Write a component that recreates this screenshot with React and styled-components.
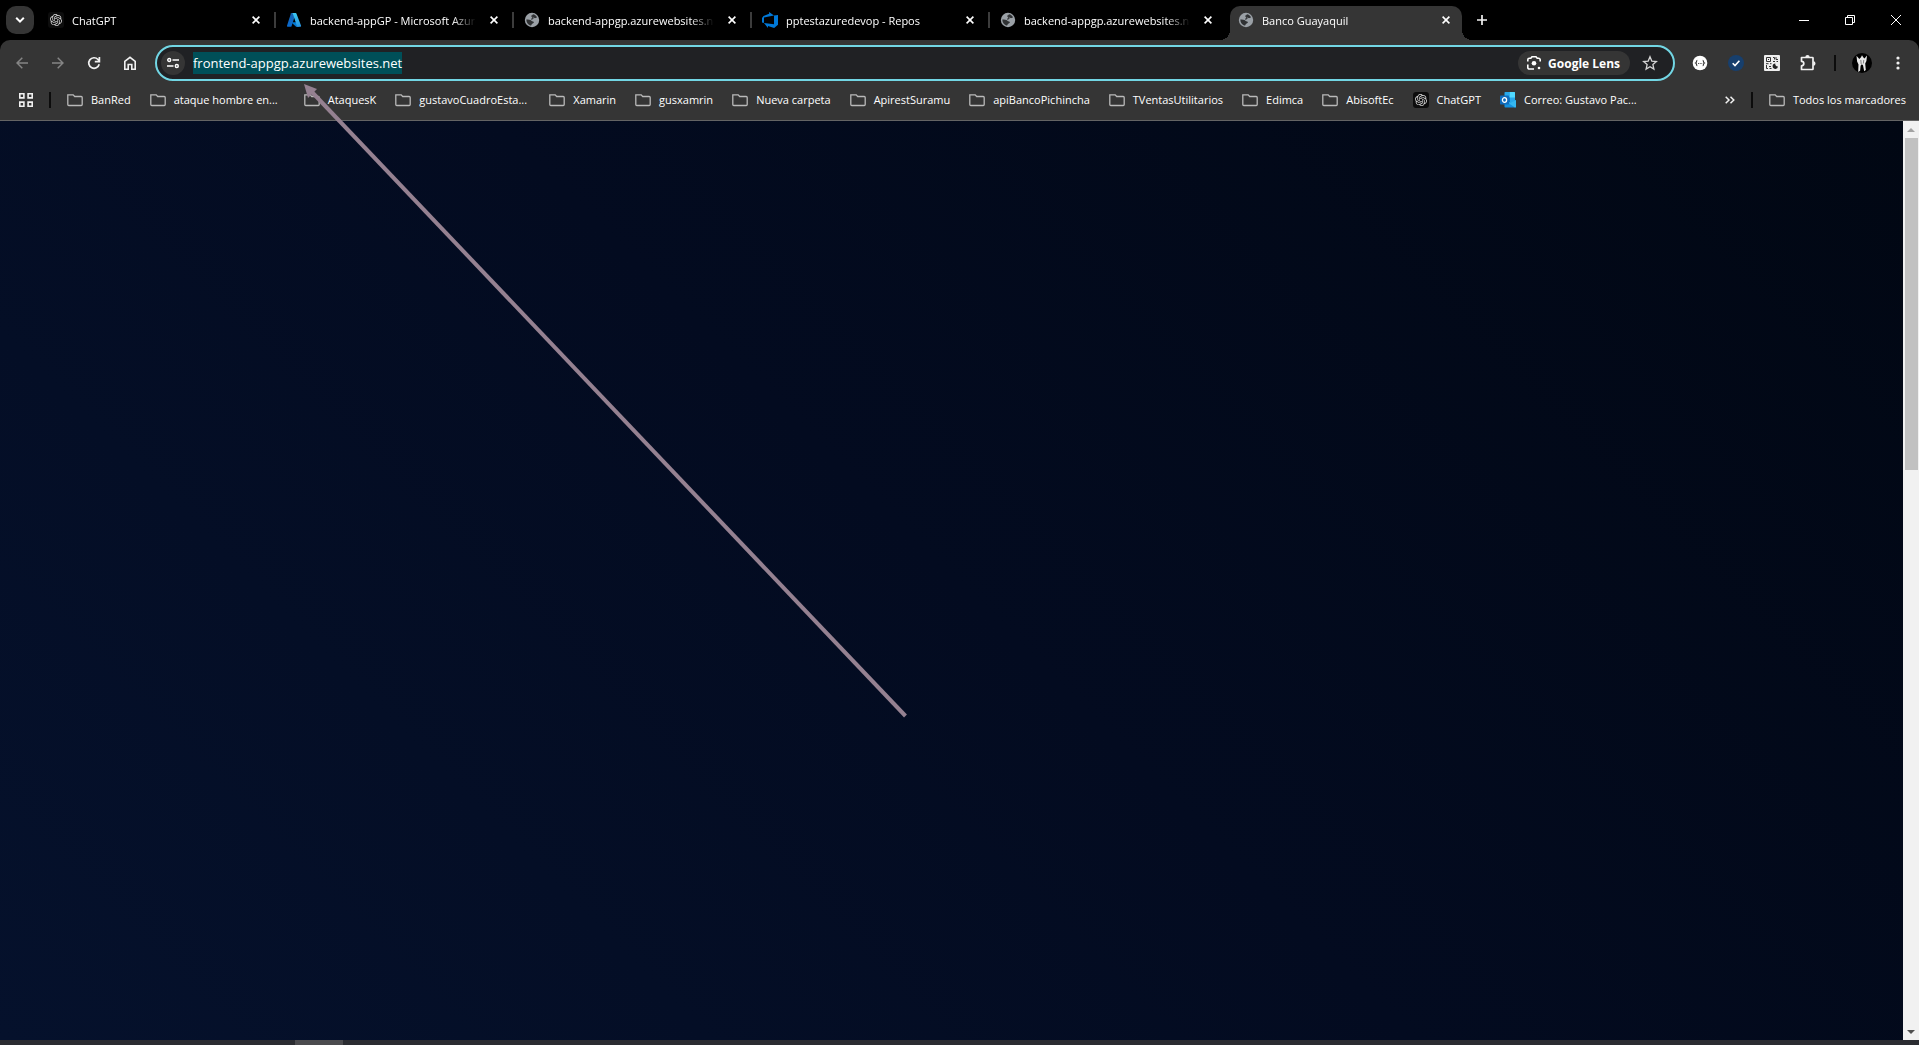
import React, { useEffect, useRef } from "react";
import styled, { createGlobalStyle, css } from "styled-components";
import { SiOpenai } from "react-icons/si";

const chrome = "#353535";

const GlobalStyle = createGlobalStyle`
  * { box-sizing: border-box; }
  html, body, #root { height: 100%; }
  body {
    margin: 0;
    background: #000;
    color: #fff;
    font-family: "Open Sans", "Noto Sans", sans-serif;
    font-size: 11px;
    overflow: hidden;
  }
  button { font: inherit; color: inherit; background: none; border: 0; padding: 0; }
  svg { display: block; flex: none; }
`;

const Window = styled.div`
  position: relative;
  display: flex;
  flex-direction: column;
  height: 100vh;
`;

const TabStrip = styled.header`
  display: flex;
  align-items: center;
  height: 40px;
  padding-left: 6px;
  background: #000;
`;

const TabSearch = styled.button`
  display: grid;
  place-items: center;
  flex: none;
  width: 28px;
  height: 28px;
  margin-right: 4px;
  border-radius: 10px;
  background: ${chrome};
`;

const Tabs = styled.nav`
  display: flex;
  min-width: 0;
  height: 40px;
`;

const Tab = styled.div`
  position: relative;
  display: flex;
  align-items: center;
  flex: 0 1 238px;
  width: 238px;
  min-width: 0;
  padding: 0 10px;
  z-index: 0;

  ${({ $divided }) => $divided && css`
    &::after {
      content: "";
      position: absolute;
      right: 0;
      top: 12px;
      width: 2px;
      height: 16px;
      background: #3c3c3c;
    }
  `}

  ${({ $active }) => $active && css`
    &::before {
      content: "";
      position: absolute;
      z-index: -1;
      inset: 6px 4px 0 2px;
      border-radius: 10px 10px 0 0;
      background: ${chrome};
    }
    &::after {
      content: "";
      position: absolute;
      z-index: -1;
      left: -8px;
      right: -6px;
      bottom: 0;
      height: 10px;
      background:
        radial-gradient(circle at 0 0, transparent 10px, ${chrome} 10px) left / 10px 10px no-repeat,
        radial-gradient(circle at 100% 0, transparent 10px, ${chrome} 10px) right / 10px 10px no-repeat;
    }
  `}
`;

const TabSelect = styled.button`
  display: flex;
  align-items: center;
  gap: 8px;
  flex: 1;
  min-width: 0;
  height: 28px;
  text-align: left;
`;

const TabTitle = styled.span`
  flex: 1;
  padding-top: 2px;
  overflow: hidden;
  white-space: nowrap;
  line-height: 16px;
  mask-image: linear-gradient(to right, #000 calc(100% - 24px), transparent);
`;

const TabClose = styled.button`
  display: grid;
  place-items: center;
  flex: none;
  width: 16px;
  height: 16px;
  margin: 0 2px 0 10px;
`;

const RoundButton = styled.button`
  display: grid;
  place-items: center;
  flex: none;
  width: 28px;
  height: 28px;
  border-radius: 50%;
  color: ${({ $dim }) => ($dim ? "#858585" : "#f1f1f1")};
`;

const NewTab = styled(RoundButton)`
  margin-left: 2px;
`;

const WindowControls = styled.div`
  display: flex;
  margin-left: auto;
`;

const WindowButton = styled.button`
  display: grid;
  place-items: center;
  width: 46px;
  height: 40px;
`;

const Toolbar = styled.div`
  display: flex;
  align-items: center;
  gap: 11px;
  padding: 5px 7px 0 8px;
  border-radius: 10px 10px 0 0;
  background: ${chrome};
`;

const ButtonGroup = styled.div`
  display: flex;
  align-items: center;
  gap: 8px;
`;

const Divider = styled.span`
  flex: none;
  width: 2px;
  height: 16px;
  margin: ${({ $gap }) => `0 ${$gap}px`};
  background: #0c0c0c;
`;

const AddressBar = styled.form`
  display: flex;
  align-items: center;
  flex: 1;
  min-width: 0;
  height: 36px;
  padding: 0 9px 0 4px;
  border: 2px solid #72d6e4;
  border-radius: 18px;
  background: #202124;
`;

const SiteInfo = styled.button`
  display: grid;
  place-items: center;
  width: 24px;
  height: 24px;
  margin-right: 8px;
  border-radius: 50%;
  background: ${chrome};
`;

const AddressInput = styled.input`
  flex: 1;
  min-width: 0;
  height: 22px;
  padding: 0;
  border: 0;
  outline: 0;
  background: none;
  color: #fff;
  font: 13px/22px "Open Sans", "Noto Sans", sans-serif;
  &::selection { background: #004f58; color: #fff; }
`;

const LensButton = styled.button`
  display: flex;
  align-items: center;
  gap: 6px;
  height: 24px;
  padding: 0 10px 0 8px;
  margin-right: 10px;
  border-radius: 12px;
  background: ${chrome};
  font-size: 12px;
  font-weight: 700;
  white-space: nowrap;
`;

const StarButton = styled.button`
  display: grid;
  place-items: center;
  width: 20px;
  height: 24px;
  margin-right: 4px;
`;

const BookmarkBar = styled.nav`
  display: flex;
  align-items: center;
  height: 40px;
  padding: 0 13px 2px 19px;
  border-bottom: 1px solid #646464;
  background: ${chrome};
`;

const BookmarkList = styled.div`
  display: flex;
  flex: 1;
  min-width: 0;
  gap: 19px;
  overflow: hidden;
`;

const Bookmark = styled.button`
  display: flex;
  align-items: center;
  flex: none;
  gap: 8px;
  width: ${({ $long }) => ($long ? "135px" : "auto")};
  height: 28px;
  white-space: nowrap;
`;

const PlainButton = styled.button`
  display: grid;
  place-items: center;
`;

const Viewport = styled.main`
  display: flex;
  flex: 1;
  min-height: 0;
`;

const Page = styled.section`
  flex: 1;
  background: linear-gradient(45deg, #05112c 0%, #030b20 50%, #010713 100%);
`;

const ScrollTrack = styled.div`
  display: flex;
  flex-direction: column;
  align-items: center;
  width: 16px;
  background: #f1f1f1;
`;

const ScrollArrow = styled.button`
  display: grid;
  place-items: center;
  width: 16px;
  height: 17px;
  color: ${({ $dim }) => ($dim ? "#a3a3a3" : "#505050")};
`;

const ScrollBody = styled.div`
  display: grid;
  grid-template-rows: 3fr 5fr;
  flex: 1;
  width: 13px;
`;

const ScrollThumb = styled.div`
  background: #c1c1c1;
`;

const Taskbar = styled.footer`
  display: flex;
  flex: none;
  height: 5px;
  padding-left: 295px;
  background: #2b2c31;
`;

const TaskbarItem = styled.span`
  width: 48px;
  background: #4b4b4e;
`;

const Arrow = styled.svg`
  position: absolute;
  left: 300px;
  top: 80px;
  pointer-events: none;
`;

const Close = () => (
  <svg width="8" height="8" viewBox="0 0 8 8" stroke="#fff" strokeWidth="1.6">
    <path d="M.6.6l6.8 6.8M7.4.6L.6 7.4" />
  </svg>
);

const Globe = () => (
  <svg width="16" height="16" viewBox="0 0 16 16">
    <circle cx="8" cy="8" r="7.2" fill="#9aa0a6" />
    <path
      d="M9 2.2c1.600.3 3.300 1.400 4.100 3-.9.500-1.500 1.100-2.600.9-.9-.2-.700-1-1.600-1.100-.7-.1-1.200-.8-.9-1.500zM2.300 7.500c1.600-.2 3.100-.1 4.200.5 1 .6 1.300 1.300 2.500 1.400 1.100.1 1.100 1.100.4 1.700-.8.600-1.700.7-1.800 1.700-.1.700-.7 1-1.400.7-2.300-.9-3.900-3.200-3.900-6z"
      fill="#303234"
    />
    <path d="M8 3.500c-.5 1.200.7 1.500 1 2.300.3.900-.9 1.200-1.900 1.300" fill="none" stroke="#303234" strokeWidth="1.200" />
  </svg>
);

const Azure = () => (
  <svg width="16" height="16" viewBox="0 0 16 16">
    <defs>
      <linearGradient id="azureLeft" x1="0" y1="0" x2="0" y2="1">
        <stop offset="0" stopColor="#1561b0" />
        <stop offset="1" stopColor="#0a6bd0" />
      </linearGradient>
      <linearGradient id="azureRight" x1="0" y1="0" x2="0" y2="1">
        <stop offset="0" stopColor="#3ccbf4" />
        <stop offset="1" stopColor="#2892df" />
      </linearGradient>
    </defs>
    <path d="M5.700 1h4.200L5.500 14.200a.9.900 0 0 1-.8.600H1.800a.9.900 0 0 1-.8-1.100L4.900 1.600A.9.900 0 0 1 5.700 1z" fill="url(#azureLeft)" />
    <path d="M11.800 10.300H5.200l4.600 4.300c.200.2.400.2.600.2h3z" fill="#0078d4" />
    <path d="M10.400 1.600A.9.900 0 0 0 9.600 1H6c.4 0 .7.200.8.600l4 12.100a.9.900 0 0 1-.8 1.100h4.300a.9.900 0 0 0 .8-1.100z" fill="url(#azureRight)" />
  </svg>
);

const DevOps = () => (
  <svg width="16" height="16" viewBox="0 0 24 24" fill="#0078d7">
    <path d="M0 8.877L2.247 5.910l8.405-3.416V.022l7.370 5.393L2.966 8.338v8.225L0 15.707zm24-4.450v14.651l-5.753 4.900-9.303-3.057v3.056l-5.978-7.416 15.057 1.798V5.415z" />
  </svg>
);

const OpenAI = ({ size = 12 }) => (
  <svg width="16" height="16" viewBox="0 0 16 16">
    <rect width="16" height="16" rx="3" fill="#0d0d0d" />
    <SiOpenai x={(16 - size) / 2} y={(16 - size) / 2} size={size} color="#d8d8d8" />
  </svg>
);

const Folder = () => (
  <svg width="16" height="16" viewBox="0 0 16 16" fill="none" stroke="#b9b9b9" strokeWidth="1.300">
    <path d="M.8 2.900h5.400l1.500 1.600h6.500a1 1 0 0 1 1 1v7a1 1 0 0 1-1 1H1.800a1 1 0 0 1-1-1z" />
  </svg>
);

const Outlook = () => (
  <svg width="16" height="16" viewBox="0 0 16 16">
    <rect x="4.500" y="0" width="10.500" height="11" rx=".8" fill="#28a8ea" />
    <path d="M9.800 0h4.400c.500 0 .8.300.8.800V5.500H9.800z" fill="#50d9ff" />
    <path d="M4.500 5.500h5.300V10H4.500z" fill="#0364b8" />
    <path d="M4.500 9l5.800 2.300L16 8v6.600c0 .7-.4 1-1 1H5.500c-.6 0-1-.4-1-1z" fill="#1490df" />
    <path d="M16 8v6.600c0 .7-.4 1-1 1l-6-4z" fill="#35b8f1" />
    <rect x="0" y="3.500" width="9" height="9" rx=".8" fill="#0f6cbd" />
    <ellipse cx="4.500" cy="8" rx="2.100" ry="2.300" fill="none" stroke="#fff" strokeWidth="1.300" />
  </svg>
);

const icons = { openai: <OpenAI />, azure: <Azure />, globe: <Globe />, devops: <DevOps />, folder: <Folder />, outlook: <Outlook /> };

const tabs = [
  { icon: "openai", title: "ChatGPT" },
  { icon: "azure", title: "backend-appGP - Microsoft Azure" },
  { icon: "globe", title: "backend-appgp.azurewebsites.net" },
  { icon: "devops", title: "pptestazuredevop - Repos" },
  { icon: "globe", title: "backend-appgp.azurewebsites.net" },
  { icon: "globe", title: "Banco Guayaquil", active: true },
];

const bookmarks = [
  { icon: "folder", name: "BanRed" },
  { icon: "folder", name: "ataque hombre en...", long: true },
  { icon: "folder", name: "AtaquesK" },
  { icon: "folder", name: "gustavoCuadroEsta...", long: true },
  { icon: "folder", name: "Xamarin" },
  { icon: "folder", name: "gusxamrin" },
  { icon: "folder", name: "Nueva carpeta" },
  { icon: "folder", name: "ApirestSuramu" },
  { icon: "folder", name: "apiBancoPichincha" },
  { icon: "folder", name: "TVentasUtilitarios" },
  { icon: "folder", name: "Edimca" },
  { icon: "folder", name: "AbisoftEc" },
  { icon: "openai", name: "ChatGPT" },
  { icon: "outlook", name: "Correo: Gustavo Pac...", long: true },
];

function TabBar() {
  return (
    <TabStrip>
      <TabSearch aria-label="Buscar pestañas">
        <svg width="10" height="8" viewBox="0 0 10 8" fill="none" stroke="#fff" strokeWidth="2">
          <path d="M1.200 1.800L5 5.600l3.800-3.800" />
        </svg>
      </TabSearch>
      <Tabs>
        {tabs.map((tab, i) => (
          <Tab key={i} $active={tab.active} $divided={i < tabs.length - 2}>
            <TabSelect>
              {icons[tab.icon]}
              <TabTitle>{tab.title}</TabTitle>
            </TabSelect>
            <TabClose aria-label="Cerrar pestaña"><Close /></TabClose>
          </Tab>
        ))}
      </Tabs>
      <NewTab aria-label="Nueva pestaña">
        <svg width="10" height="10" viewBox="0 0 10 10" stroke="currentColor" strokeWidth="1.700"><path d="M5 0v10M0 5h10" /></svg>
      </NewTab>
      <WindowControls>
        <WindowButton aria-label="Minimizar">
          <svg width="10" height="10" viewBox="0 0 10 10"><path d="M0 5h10v1H0z" fill="#fff" /></svg>
        </WindowButton>
        <WindowButton aria-label="Restaurar">
          <svg width="10" height="10" viewBox="0 0 10 10" fill="none" stroke="#fff"><path d="M.5 2.500h7v7h-7zM2.500 2.500v-2h7v7h-2" /></svg>
        </WindowButton>
        <WindowButton aria-label="Cerrar">
          <svg width="10" height="10" viewBox="0 0 10 10" stroke="#fff"><path d="M0 0l10 10M10 0L0 10" /></svg>
        </WindowButton>
      </WindowControls>
    </TabStrip>
  );
}

function Address() {
  const input = useRef(null);
  useEffect(() => {
    input.current.focus();
    input.current.select();
  }, []);
  return (
    <AddressBar onSubmit={(e) => e.preventDefault()}>
      <SiteInfo type="button" aria-label="Información del sitio">
        <svg width="12" height="12" viewBox="0 0 12 12" fill="none" stroke="#fff" strokeWidth="1.400">
          <circle cx="2.200" cy="3" r="1.500" /><path d="M5.500 3H12M0 9h6.500" /><circle cx="9.800" cy="9" r="1.500" />
        </svg>
      </SiteInfo>
      <AddressInput ref={input} aria-label="Dirección" defaultValue="frontend-appgp.azurewebsites.net" spellCheck={false} />
      <LensButton type="button">
        <svg width="16" height="16" viewBox="0 0 16 16" fill="none" stroke="#fff" strokeWidth="1.600">
          <path d="M1.800 6.500V4.800a1.500 1.500 0 0 1 1.500-1.500h1.500L6 1.800h4l1.200 1.500h1.500a1.500 1.500 0 0 1 1.500 1.500v1.700M1.800 9.500v3a1.500 1.500 0 0 0 1.500 1.500H8" />
          <circle cx="8" cy="8.300" r="2.300" fill="#fff" stroke="none" />
          <circle cx="13" cy="13" r="1.300" fill="#fff" stroke="none" />
        </svg>
        Google Lens
      </LensButton>
      <StarButton type="button" aria-label="Añadir a marcadores">
        <svg width="16" height="16" viewBox="0 0 16 16" fill="none" stroke="#d5d5d5" strokeWidth="1.300">
          <path d="M8 1.800l1.800 4.300 4.600.4-3.500 3.100 1 4.500L8 11.700l-3.900 2.400 1-4.500L1.600 6.500l4.600-.4z" />
        </svg>
      </StarButton>
    </AddressBar>
  );
}

function Extensions() {
  return (
    <ButtonGroup>
      <RoundButton aria-label="JSON">
        <svg width="16" height="16" viewBox="0 0 16 16">
          <circle cx="8" cy="8" r="7.300" fill="#fff" />
          <path d="M5.300 5.200C4.200 5.200 5 7.400 3.700 8c1.300.6.5 2.800 1.600 2.800M10.700 5.200c1.100 0 .3 2.200 1.600 2.800-1.300.6-.5 2.800-1.600 2.800" fill="none" stroke="#333" strokeWidth="1.100" />
          <path d="M6 8.500h1M7.700 8.500h1M9.400 8.500h.8" stroke="#555" strokeWidth="1" />
        </svg>
      </RoundButton>
      <RoundButton aria-label="Verificación">
        <svg width="16" height="16" viewBox="0 0 16 16">
          <circle cx="8" cy="8" r="8" fill="#173f6d" />
          <path d="M4.700 8.200l2.300 2.300 4.400-4.700" fill="none" stroke="#fff" strokeWidth="1.600" />
        </svg>
      </RoundButton>
      <RoundButton aria-label="Código QR">
        <svg width="16" height="16" viewBox="0 0 16 16">
          <rect width="16" height="16" rx="1" fill="#eee" />
          <path d="M2.500 2.500h4v4h-4zM9 2.500h1.500v2M12 2v2.500h2M9 6.500h2M12.500 6.500H14M2 8.700h2.500M6 8.700h1.500M2.500 10v3.500h1.500M5 11.500h2M5.500 13.500H7.500" fill="none" stroke="#333" strokeWidth="1" />
          <path d="M4 4h1v1H4zM11.300 8.500c-.3 1.700.6 2.900 2.700 3a2.700 2.700 0 1 1-2.700-3z" fill="#222" />
        </svg>
      </RoundButton>
      <RoundButton aria-label="Extensiones">
        <svg width="18" height="18" viewBox="0 0 18 18" fill="none" stroke="currentColor" strokeWidth="1.700" strokeLinejoin="round">
          <path d="M2.500 3.500h11a.5.500 0 0 1 .5.500v11a.5.500 0 0 1-.5.500h-11v-3.600a2.300 2.300 0 0 0 0-4.600z" />
          <path d="M6.300 3.200a2.200 2.200 0 0 1 4.400 0zM14.300 7.300a2.200 2.200 0 0 1 0 4.400z" fill="currentColor" stroke="none" />
        </svg>
      </RoundButton>
      <Divider $gap={4} />
      <RoundButton aria-label="Perfil">
        <svg width="20" height="20" viewBox="0 0 20 20">
          <circle cx="10" cy="10" r="10" fill="#000" />
          <path d="M4.500 2.800L7.300 6 9 4.200l1-2 1.200 2 1.300 1.300 2.500-3-.6 5.500-1.200 2.500.6 6.500-1.600 1.300-1.200-6-1.200-1-1.200 1.500-.5 5-1.900 1.200.3-7.500-1.400-3z" fill="#e8e8e8" />
          <path d="M8.800 7l.4 4M11.800 7l-.5 3.500" stroke="#666" strokeWidth=".8" />
        </svg>
      </RoundButton>
      <RoundButton aria-label="Menú">
        <svg width="4" height="14" viewBox="0 0 4 14" fill="currentColor">
          <circle cx="2" cy="2" r="1.600" /><circle cx="2" cy="7" r="1.600" /><circle cx="2" cy="12" r="1.600" />
        </svg>
      </RoundButton>
    </ButtonGroup>
  );
}

function Navigation() {
  return (
    <ButtonGroup>
      <RoundButton $dim aria-label="Atrás">
        <svg width="12" height="12" viewBox="0 0 12 12" fill="none" stroke="currentColor" strokeWidth="1.500"><path d="M12 6H1M6.300.7L1 6l5.300 5.300" /></svg>
      </RoundButton>
      <RoundButton $dim aria-label="Adelante">
        <svg width="12" height="12" viewBox="0 0 12 12" fill="none" stroke="currentColor" strokeWidth="1.500"><path d="M0 6h11M5.700.7L11 6l-5.300 5.300" /></svg>
      </RoundButton>
      <RoundButton aria-label="Recargar">
        <svg width="14" height="14" viewBox="0 0 14 14" fill="none" stroke="currentColor" strokeWidth="1.700">
          <path d="M12.200 8.300A5.300 5.300 0 1 1 11 3.500l1.300 1.400M12.400 1v4.600H7.800" />
        </svg>
      </RoundButton>
      <RoundButton aria-label="Inicio">
        <svg width="14" height="14" viewBox="0 0 14 14" fill="none" stroke="currentColor" strokeWidth="1.600">
          <path d="M1.800 5.400L7 1.300l5.200 4.100v7.800H8.800V8.500H5.200v4.700H1.800z" />
        </svg>
      </RoundButton>
    </ButtonGroup>
  );
}

function Bookmarks() {
  return (
    <BookmarkBar>
      <PlainButton aria-label="Aplicaciones">
        <svg width="14" height="14" viewBox="0 0 14 14" fill="none" stroke="#f1f1f1" strokeWidth="1.600">
          <path d="M.8.8h4.100v4.100H.8zM9.100.8h4.100v4.100H9.100zM.8 9.100h4.100v4.100H.8zM9.100 9.100h4.100v4.100H9.100z" />
        </svg>
      </PlainButton>
      <Divider $gap={16} />
      <BookmarkList>
        {bookmarks.map(({ icon, name, long }) => (
          <Bookmark key={name} $long={long}>{icons[icon]}{name}</Bookmark>
        ))}
      </BookmarkList>
      <PlainButton aria-label="Más marcadores">
        <svg width="10" height="8" viewBox="0 0 10 8" fill="none" stroke="#f1f1f1" strokeWidth="1.500"><path d="M.7.7L4 4 .7 7.300M5.500.7L8.800 4 5.500 7.300" /></svg>
      </PlainButton>
      <Divider $gap={16} />
      <Bookmark><Folder />Todos los marcadores</Bookmark>
    </BookmarkBar>
  );
}

export default function App() {
  return (
    <Window>
      <GlobalStyle />
      <TabBar />
      <Toolbar>
        <Navigation />
        <Address />
        <Extensions />
      </Toolbar>
      <Bookmarks />
      <Viewport>
        <Page />
        <ScrollTrack>
          <ScrollArrow $dim aria-label="Subir">
            <svg width="8" height="4" viewBox="0 0 8 4" fill="currentColor"><path d="M0 4l4-4 4 4z" /></svg>
          </ScrollArrow>
          <ScrollBody><ScrollThumb /></ScrollBody>
          <ScrollArrow aria-label="Bajar">
            <svg width="8" height="4" viewBox="0 0 8 4" fill="currentColor"><path d="M0 0l4 4 4-4z" /></svg>
          </ScrollArrow>
        </ScrollTrack>
      </Viewport>
      <Taskbar><TaskbarItem /></Taskbar>
      <Arrow width="610" height="640" viewBox="0 0 610 640">
        <path d="M10 10L605.500 636" stroke="#958191" strokeWidth="4" />
        <path d="M4 4l13 5-9 9z" fill="#958191" />
      </Arrow>
    </Window>
  );
}
